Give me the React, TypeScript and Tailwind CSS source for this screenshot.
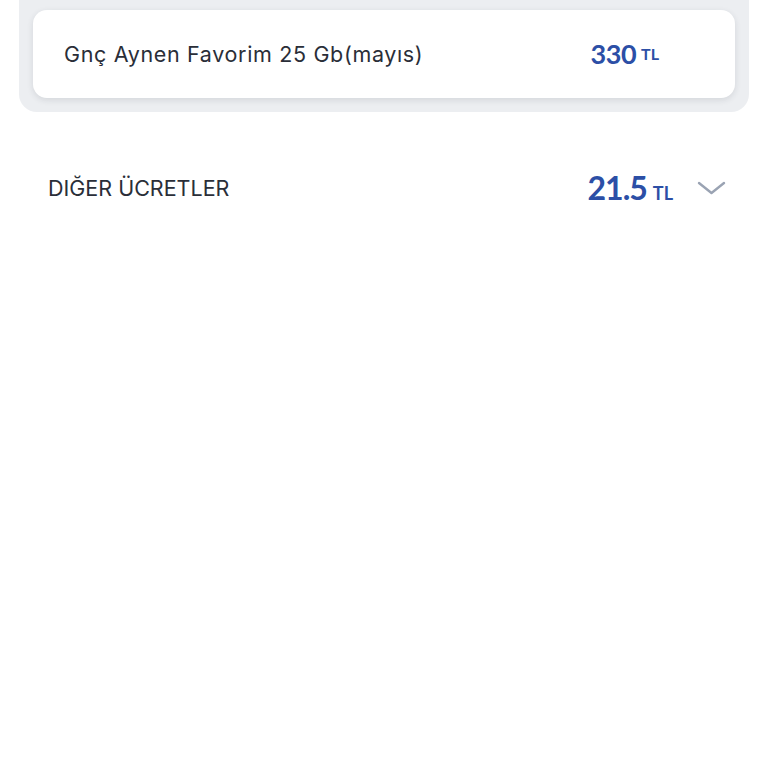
import React from "react";

export default function App() {
  return (
    <div className="min-h-[768px] w-[768px] bg-white" style={{ fontFamily: "Lato, 'Open Sans', sans-serif" }}>
      <div className="mx-[19px] -mt-4 rounded-b-[18px] bg-[#eceef1] px-[14px] pt-[26px] pb-[14px]">
        <div className="flex h-[88px] items-center rounded-[14px] bg-white pl-[31px] pr-[76px] shadow-[0_2px_6px_rgba(30,40,60,0.12)]">
          <div className="flex-1 font-['Inter'] text-[21.5px] tracking-[0.65px] text-[#2a2e38]">Gnç Aynen Favorim 25 Gb(mayıs)</div>
          <div className="flex items-center gap-[5px] text-[#2c4fa6]">
            <span className="text-[27px] font-bold tracking-[-0.5px]">330</span>
            <span className="text-[16px] font-bold">TL</span>
          </div>
        </div>
      </div>

      <div className="mt-[52px] flex items-center pl-[48px] pr-[42px]">
        <div className="flex-1 font-['Inter'] text-[21.5px] text-[#2a2e38]">DIĞER ÜCRETLER</div>
        <div className="flex items-baseline gap-[6px] text-[#2c4fa6]">
          <span className="text-[32px] font-bold tracking-[-1px]">21.5</span>
          <span className="text-[18px] font-bold">TL</span>
        </div>
        <svg className="ml-[24px]" width="29" height="14" viewBox="0 0 29 14" fill="none">
          <path d="M2 2 L14.5 12 L27 2" stroke="#9aa3b3" strokeWidth="2.4" strokeLinecap="round" strokeLinejoin="round" />
        </svg>
      </div>
    </div>
  );
}
